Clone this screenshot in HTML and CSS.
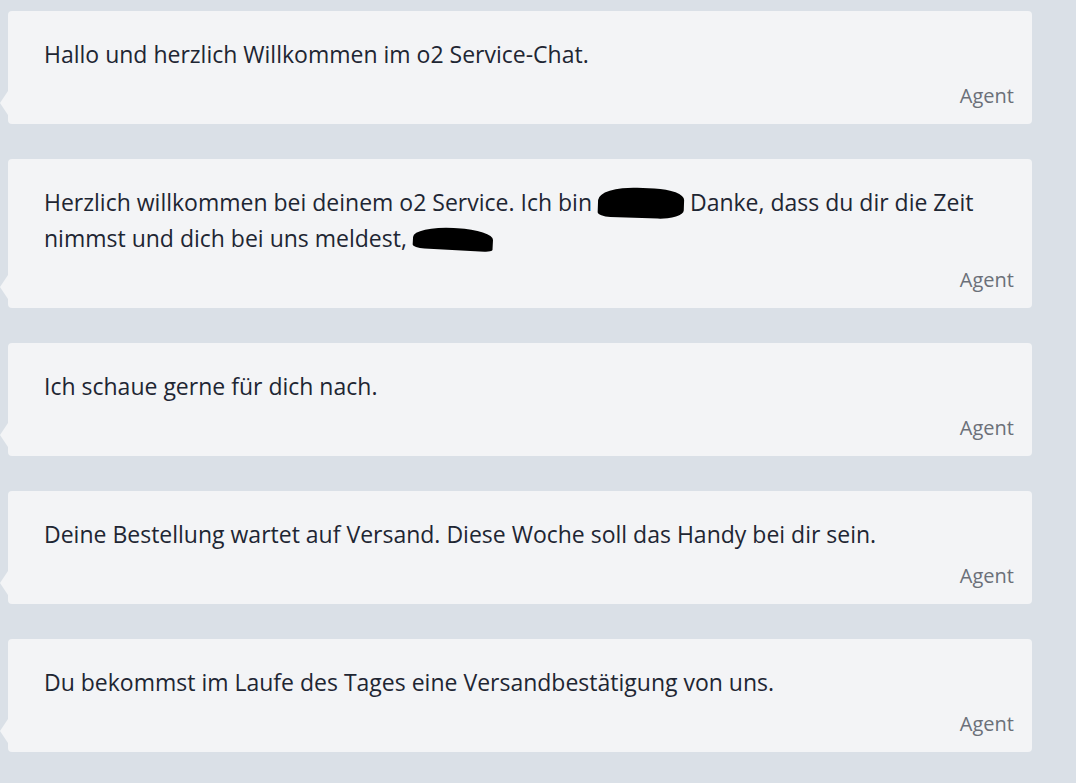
FILE: index.html
```html
<!DOCTYPE html>
<html lang="de">
<head>
    <meta charset="UTF-8">
    <meta name="viewport" content="width=device-width, initial-scale=1.0">
    <title>o2 Service-Chat</title>
    <link rel="stylesheet" href="styles.css">
</head>
<body>
    <div class="chat">
        <div class="msg">
            <p class="msg-text">Hallo und herzlich Willkommen im o2 Service-Chat.</p>
            <div class="msg-from">Agent</div>
        </div>
        <div class="msg">
            <p class="msg-text">Herzlich willkommen bei deinem o2 Service. Ich bin <span class="redact redact-name"></span> Danke, dass du dir die Zeit nimmst und dich bei uns meldest, <span class="redact redact-user"></span></p>
            <div class="msg-from">Agent</div>
        </div>
        <div class="msg">
            <p class="msg-text">Ich schaue gerne für dich nach.</p>
            <div class="msg-from">Agent</div>
        </div>
        <div class="msg">
            <p class="msg-text">Deine Bestellung wartet auf Versand. Diese Woche soll das Handy bei dir sein.</p>
            <div class="msg-from">Agent</div>
        </div>
        <div class="msg">
            <p class="msg-text">Du bekommst im Laufe des Tages eine Versandbestätigung von uns.</p>
            <div class="msg-from">Agent</div>
        </div>
    </div>
</body>
</html>
```

FILE: styles.css
```css
* {
    margin: 0;
    padding: 0;
    box-sizing: border-box;
}
body {
    background-color: #dae0e7;
    font-family: "Open Sans", "Liberation Sans", sans-serif;
    color: #1e2633;
}
.chat {
    width: 1032px;
    padding: 11px 0 30px 8px;
    display: flex;
    flex-direction: column;
    gap: 35px;
}
.msg {
    position: relative;
    background-color: #f3f4f6;
    border-radius: 4px;
    padding: 25px 18px 14px 36px;
}
/* kleiner Pfeil links unten */
.msg::before {
    content: "";
    position: absolute;
    left: -8px;
    bottom: 9px;
    width: 8px;
    height: 24px;
    background-color: #f3f4f6;
    clip-path: polygon(100% 0, 0 50%, 100% 100%);
}
.msg-text {
    font-size: 23px;
    line-height: 36px;
}
.msg-from {
    margin-top: 10px;
    text-align: right;
    font-size: 20px;
    line-height: 28px;
    color: #6b7079;
}
.redact {
    display: inline-block;
    background-color: #000;
    vertical-align: middle;
}
.redact-name {
    width: 86px;
    height: 30px;
    border-radius: 45% 35% 30% 15%;
    margin-top: -4px;
    transform: rotate(2deg);
}
.redact-user {
    width: 80px;
    height: 22px;
    border-radius: 50% 45% 10% 15%;
    margin-top: -4px;
    transform: rotate(3deg);
}
```
